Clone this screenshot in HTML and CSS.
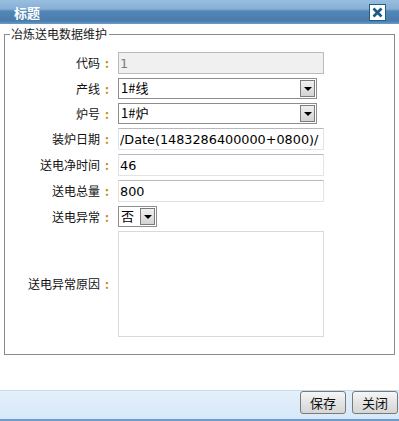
FILE: index.html
```html
<!DOCTYPE html>
<html lang="zh-CN">
<head>
    <meta charset="UTF-8">
    <title>标题</title>
    <link rel="stylesheet" href="styles.css">
</head>
<body>
    <div class="dialog">
        <div class="titlebar">
            <span class="title">标题</span>
            <span class="close">
                <svg width="11" height="11" viewBox="0 0 11 11"><path d="M1.5 1.5 L9.5 9.5 M9.5 1.5 L1.5 9.5" stroke="#175a82" stroke-width="2.6" fill="none"/></svg>
            </span>
        </div>

        <fieldset class="panel">
            <legend>冶炼送电数据维护</legend>
            <div class="form">
                <label>代码<b>:</b></label>
                <input class="field disabled" type="text" value="1" disabled>

                <label>产线<b>:</b></label>
                <div class="select wide"><span class="value">1#线</span><span class="arrow"></span></div>

                <label>炉号<b>:</b></label>
                <div class="select wide"><span class="value">1#炉</span><span class="arrow"></span></div>

                <label>装炉日期<b>:</b></label>
                <input class="field" type="text" value="/Date(1483286400000+0800)/">

                <label>送电净时间<b>:</b></label>
                <input class="field" type="text" value="46">

                <label>送电总量<b>:</b></label>
                <input class="field" type="text" value="800">

                <label>送电异常<b>:</b></label>
                <div class="select small"><span class="value">否</span><span class="arrow"></span></div>

                <label class="mid">送电异常原因<b>:</b></label>
                <textarea class="memo"></textarea>
            </div>
        </fieldset>

        <div class="footer">
            <button>保存</button>
            <button>关闭</button>
        </div>
    </div>
</body>
</html>
```

FILE: styles.css
```css
body {
    margin: 0;
    font-family: "Noto Sans CJK SC", "DejaVu Sans", sans-serif;
    font-size: 12px;
    background: white;
}
.dialog {
    width: 399px;
    height: 421px;
    display: flex;
    flex-direction: column;
    overflow: hidden;
}
.titlebar {
    height: 24px;
    flex: none;
    display: flex;
    align-items: center;
    justify-content: space-between;
    padding: 0 14px;
    padding-right: 13px;
    box-sizing: border-box;
    background: linear-gradient(#98bee0 0, #88b0d5 9px, #5387b8 11px, #497cad 21px, #6e9bc6 24px);
}
.title {
    color: white;
    font-weight: bold;
    font-size: 13px;
    line-height: 14px;
    margin-top: 1px;
}
.close {
    width: 15px;
    height: 15px;
    border: 1px solid #1d6088;
    background: white;
    display: flex;
    align-items: center;
    justify-content: center;
}
.panel {
    margin: 3px 4px 0 4px;
    padding: 11px 0 17px 0;
    border: 1px solid #8a8a8a;
    min-width: 0;
}
.panel legend {
    padding: 0 2px 0 1px;
    margin-left: 5px;
    color: #1a1a1a;
    line-height: 14px;
}
.form {
    display: grid;
    grid-template-columns: 109px 206px;
    column-gap: 4px;
    row-gap: 4px;
    align-items: start;
}
.form label {
    text-align: right;
    color: #111;
    line-height: 16px;
    padding-top: 3px;
    white-space: nowrap;
}
.form label b {
    display: inline-block;
    width: 14px;
    text-align: center;
    font-weight: bold;
    color: #c08a10;
}
.form label.mid {
    align-self: center;
    padding-top: 0;
}
.field {
    height: 22px;
    box-sizing: border-box;
    margin: 0;
    padding: 0 1px;
    border: 1px solid #dfe4ea;
    border-top-color: #b5b9c0;
    font-family: "DejaVu Sans", sans-serif;
    font-size: 12.8px;
    color: #000;
    background: white;
}
.field.disabled {
    background: #f0f0f0;
    border-color: #b8bcc0;
    color: #7a7a7a;
}
.select {
    height: 21px;
    box-sizing: border-box;
    border: 1px solid #8d8d8d;
    background: white;
    display: flex;
    align-items: stretch;
}
.select.wide {
    width: 199px;
}
.select.small {
    width: 39px;
}
.select .value {
    flex: 1;
    padding-left: 2px;
    line-height: 18px;
    font-size: 13px;
    color: #000;
}
.select .arrow {
    width: 15px;
    margin: 1px;
    border: 1px solid #7c7c7c;
    box-sizing: border-box;
    background: linear-gradient(#f0f0f0, #d3d3d3);
    display: flex;
    align-items: center;
    justify-content: center;
}
.select .arrow::after {
    content: "";
    border-left: 4px solid transparent;
    border-right: 4px solid transparent;
    border-top: 4px solid #000;
}
.memo {
    height: 106px;
    box-sizing: border-box;
    margin: 0;
    border: 1px solid #d4dae0;
    resize: none;
    background: white;
}
.footer {
    margin-top: auto;
    height: 31px;
    flex: none;
    box-sizing: border-box;
    border-top: 1px solid #c4dcf1;
    border-bottom: 2px solid #6c9ccb;
    background: linear-gradient(#e4f0fb, #d6e8f8);
    display: flex;
    justify-content: flex-end;
    align-items: flex-start;
    gap: 6px;
    padding: 0 1px 0 0;
}
button {
    width: 46px;
    height: 23px;
    border: 1px solid #7a7a7a;
    border-radius: 3px;
    background: linear-gradient(#f6f6f6, #e4e4e4 50%, #d6d6d6);
    font-family: "Noto Sans CJK SC", sans-serif;
    font-size: 13px;
    color: #111;
    padding: 0;
    line-height: 20px;
}
```
